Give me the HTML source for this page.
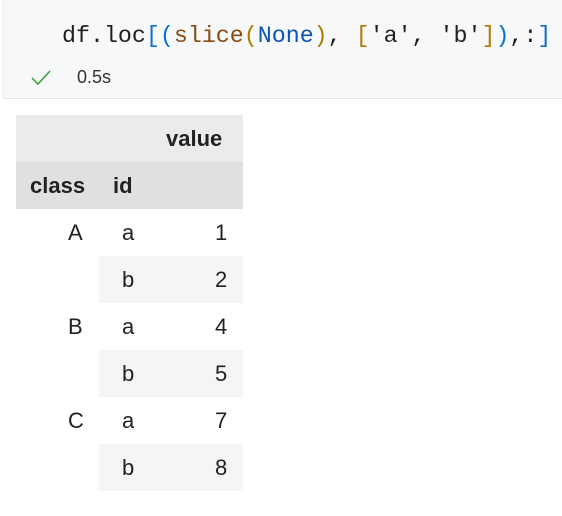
<!DOCTYPE html>
<html><head><style>
body{margin:0;width:562px;height:516px;background:#fff;position:relative;overflow:hidden;font-family:"Liberation Sans",sans-serif;}
.cell{position:absolute;left:2px;top:0;width:560px;height:98px;background:#f7f8fa;border-bottom:1px solid #e5e7ea;border-left:1px solid #eceef0}
.code{position:absolute;left:62px;top:21px;font-family:"Liberation Mono",monospace;font-size:23.3px;color:#1f1f1f;white-space:pre;line-height:30px}
.b{color:#0e6fd0}.f{color:#8a4a10}.k{color:#0b55b0}.y{color:#b07d00}
.st{position:absolute;left:77px;top:67px;font-size:18px;color:#333}
.chk{position:absolute;left:31px;top:70px}
.r{position:absolute;left:16px;width:227px;height:47px}
.t{position:absolute;font-size:22px;line-height:47px;color:#222}
.h{font-weight:bold;color:#222}
</style></head><body>
<div class="cell"></div>
<div class="code">df.loc<span class="b">[(</span><span class="f">slice</span><span class="y">(</span><span class="k">None</span><span class="y">)</span>, <span class="y">[</span>'a', 'b'<span class="y">]</span><span class="b">)</span>,:<span class="b">]</span></div>
<svg class="chk" width="20" height="16" viewBox="0 0 20 16"><path d="M1 8 L7 14 L19 1" fill="none" stroke="#3a9a3a" stroke-width="1.5"/></svg>
<div class="st">0.5s</div>
<div class="r" style="top:115px;background:#ebebeb"></div>
<div class="r" style="top:162px;background:#e0e0e0"></div>
<div class="r" style="top:256px;left:99px;width:144px;background:#f5f5f5"></div>
<div class="r" style="top:350px;left:99px;width:144px;background:#f5f5f5"></div>
<div class="r" style="top:444px;left:99px;width:144px;background:#f5f5f5"></div>
<div class="t h" style="left:166px;top:115px">value</div>
<div class="t h" style="left:30px;top:162px">class</div>
<div class="t h" style="left:113px;top:162px">id</div>
<div class="t" style="left:68px;top:209px">A</div>
<div class="t" style="left:68px;top:303px">B</div>
<div class="t" style="left:68px;top:397px">C</div>
<div class="t" style="left:122px;top:209px">a</div>
<div class="t" style="left:122px;top:256px">b</div>
<div class="t" style="left:122px;top:303px">a</div>
<div class="t" style="left:122px;top:350px">b</div>
<div class="t" style="left:122px;top:397px">a</div>
<div class="t" style="left:122px;top:444px">b</div>
<div class="t" style="left:215px;top:209px">1</div>
<div class="t" style="left:215px;top:256px">2</div>
<div class="t" style="left:215px;top:303px">4</div>
<div class="t" style="left:215px;top:350px">5</div>
<div class="t" style="left:215px;top:397px">7</div>
<div class="t" style="left:215px;top:444px">8</div>
</body></html>
